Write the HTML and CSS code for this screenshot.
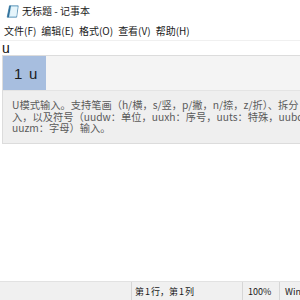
FILE: index.html
```html
<!DOCTYPE html>
<html lang="zh-CN">
<head>
<meta charset="utf-8">
<title>无标题 - 记事本</title>
<link rel="stylesheet" href="styles.css">
</head>
<body>
<div class="win">
  <div class="titlebar">
    <svg class="app-icon" width="13" height="13" viewBox="0 0 13 13">
      <path d="M3.5 0.8 L12.2 0.8 L10.6 12.2 L1.2 12.2 Z" fill="#cfeaf6" stroke="#4a87ad" stroke-width="0.8"/>
      <path d="M3.5 0.8 L5 0.8 L2.9 12.2 L1.2 12.2 Z" fill="#2f6f9a"/>
      <path d="M5.5 2 L11.5 2 L10.3 11 L4 11 Z" fill="#e6f5fb"/>
    </svg>
    <span class="title">无标题 - 记事本</span>
  </div>
  <div class="menubar">
    <span class="menu-item">文件(F)</span>
    <span class="menu-item">编辑(E)</span>
    <span class="menu-item">格式(O)</span>
    <span class="menu-item">查看(V)</span>
    <span class="menu-item">帮助(H)</span>
  </div>
  <div class="editor">
    <div class="text-line">u</div>
    <div class="ime">
      <div class="cand-row">
        <div class="cand-sel"><span class="cand-num">1</span><span class="cand-text">u</span></div>
      </div>
      <div class="desc">
        <div class="desc-line">U模式输入。支持笔画（h/横，s/竖，p/撇，n/捺，z/折）、拆分（木木）输</div>
        <div class="desc-line">入，以及符号（uudw：单位，uuxh：序号，uuts：特殊，uubd：标点，uusx：数学，</div>
        <div class="desc-line">uuzm：字母）输入。</div>
      </div>
    </div>
  </div>
  <div class="statusbar">
    <div class="sb-cell sb-empty"></div>
    <div class="sb-cell sb-pos">第 1 行，第 1 列</div>
    <div class="sb-cell sb-zoom">100%</div>
    <div class="sb-cell sb-eol">Windows (CRLF)</div>
  </div>
</div>
</body>
</html>
```
FILE: styles.css
```css
html, body {
  margin: 0;
  padding: 0;
  background: #ffffff;
}
body {
  font-family: "Noto Sans CJK SC", "Noto Sans", sans-serif;
  color: #1a1a1a;
  overflow: hidden;
}
.win {
  width: 300px;
  height: 300px;
  display: flex;
  flex-direction: column;
  overflow: hidden;
}
.titlebar {
  height: 22px;
  display: flex;
  align-items: center;
  padding-left: 6px;
  gap: 3px;
  flex: none;
}
.app-icon {
  display: block;
}
.title {
  font-size: 10px;
  line-height: 12px;
  color: #1a1a1a;
}
.menubar {
  height: 18px;
  display: flex;
  align-items: center;
  padding-left: 3px;
  gap: 3px;
  font-size: 10px;
  flex: none;
  border-bottom: 1px solid #f0f0f0;
}
.menu-item {
  padding: 0 1px;
  line-height: 14px;
}
.editor {
  flex: 1;
  position: relative;
}
.text-line {
  font-family: "Liberation Sans", sans-serif;
  font-size: 14px;
  line-height: 14px;
  padding-left: 2px;
  color: #111;
}
.ime {
  position: absolute;
  top: 14px;
  left: 2px;
  width: 340px;
  border: 1px solid #dcdcdc;
  background: #f4f4f4;
}
.cand-row {
  height: 34px;
  display: flex;
}
.cand-sel {
  width: 43px;
  background: #a7bedf;
  display: flex;
  align-items: center;
  font-family: "Liberation Sans", sans-serif;
  font-size: 15px;
  color: #1c1c1c;
}
.cand-num {
  margin-left: 11px;
  width: 15px;
}
.desc {
  background: #efefef;
  border-top: 1px solid #e4e4e4;
  padding: 8px 0 9px 9px;
  font-size: 10.25px;
  line-height: 11.5px;
  color: #5a5a5a;
}
.desc-line {
  white-space: nowrap;
}
.statusbar {
  height: 18px;
  flex: none;
  display: flex;
  background: #f0f0f0;
  border-top: 1px solid #e2e2e2;
  font-size: 9px;
  align-items: stretch;
  white-space: nowrap;
  overflow: hidden;
}
.sb-cell {
  flex: none;
  display: flex;
  align-items: center;
  border-right: 1px solid #d6d6d6;
}
.sb-empty {
  width: 131px;
}
.sb-pos {
  width: 107px;
  padding-left: 3px;
  word-spacing: -1px;
}
.sb-zoom {
  width: 31px;
  padding-left: 5px;
}
.sb-eol {
  padding-left: 5px;
  border-right: none;
}
```
